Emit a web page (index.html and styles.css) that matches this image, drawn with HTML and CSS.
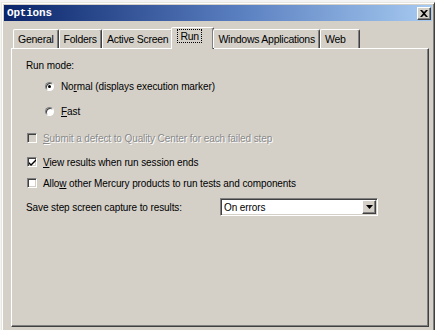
FILE: index.html
```html
<!DOCTYPE html>
<html lang="en">
<head>
  <meta charset="UTF-8" />
  <title>Options</title>
  <link rel="stylesheet" href="styles.css">
</head>
<body>
  <div class="window">
    <div class="titlebar">
      <span class="title">Options</span>
      <span class="close-btn">
        <svg width="8" height="7" viewBox="0 0 8 7"><path d="M0 0h2l2 2 2-2h2L5 3.5 8 7H6L4 5 2 7H0l3-3.5z" fill="#000"/></svg>
      </span>
    </div>

    <div class="body">
      <div class="tabs">
        <div class="tab">General</div>
        <div class="tab">Folders</div>
        <div class="tab">Active Screen</div>
        <div class="tab active"><span class="focus">Run</span></div>
        <div class="tab">Windows Applications</div>
        <div class="tab">Web</div>
      </div>

      <div class="panel">
        <div class="label run-mode">Run mode:</div>

        <div class="option radio-row">
          <span class="radio checked"></span>
          <span>No<u>r</u>mal (displays execution marker)</span>
        </div>
        <div class="option radio-row fast">
          <span class="radio"></span>
          <span><u>F</u>ast</span>
        </div>

        <div class="option check-row disabled submit">
          <span class="checkbox"></span>
          <span class="muted"><u>S</u>ubmit a defect to Quality Center for each failed step</span>
        </div>
        <div class="option check-row view">
          <span class="checkbox">
            <svg width="7" height="7" viewBox="0 0 7 7"><path d="M0 3l2 2 5-5v2L2 7 0 5z" fill="#000"/></svg>
          </span>
          <span><u>V</u>iew results when run session ends</span>
        </div>
        <div class="option check-row allow">
          <span class="checkbox"></span>
          <span>Allo<u>w</u> other Mercury products to run tests and components</span>
        </div>

        <div class="option save-row">
          <span class="save-label">Save step screen capture to results:</span>
          <div class="select">
            <span class="select-value">On errors</span>
            <span class="select-btn">
              <svg width="7" height="4" viewBox="0 0 7 4"><path d="M0 0h7L3.5 4z" fill="#000"/></svg>
            </span>
          </div>
        </div>
      </div>
    </div>
  </div>
</body>
</html>
```

FILE: styles.css
```css
* { box-sizing: border-box; }
body {
  margin: 0;
  background: #f4f4f4;
  font-family: "Liberation Sans", Arial, sans-serif;
  font-size: 10px;
  color: #000;
  overflow: hidden;
}
.window {
  margin: 2px 0 0 1px;
  height: 360px;
  background: #d4d0c8;
  border: 1px solid;
  border-color: #e8e6e0 #404040 #404040 #e8e6e0;
  box-shadow: inset 1px 1px #fff, inset -1px -1px #808080;
  padding: 2px;
}
.titlebar {
  height: 16px;
  display: flex;
  align-items: center;
  justify-content: space-between;
  padding: 0 1px 0 3px;
  background: linear-gradient(to right, #0a246a, #5a7fc0 55%, #a6caf0);
}
.title {
  color: #fff;
  font-family: "Liberation Mono", monospace;
  font-weight: bold;
  font-size: 11px;
  letter-spacing: -0.2px;
}
.close-btn {
  width: 14px;
  height: 13px;
  display: flex;
  align-items: center;
  justify-content: center;
  background: #d4d0c8;
  border: 1px solid;
  border-color: #fff #404040 #404040 #fff;
  box-shadow: inset -1px -1px #808080;
}
.body {
  padding: 6px 0 0 7px;
}
.tabs {
  display: flex;
  align-items: flex-end;
  height: 21px;
  padding-left: 2px;
  position: relative;
  z-index: 1;
}
.tab {
  height: 19px;
  min-width: 40px;
  padding: 3px 4px 0 4px;
  border: 1px solid;
  border-bottom: none;
  border-color: #fff #404040 transparent #fff;
  box-shadow: inset -1px 0 #808080;
  border-radius: 2px 2px 0 0;
  font-size: 10.5px;
  letter-spacing: -0.25px;
  white-space: nowrap;
}
.tab.active {
  height: 22px;
  min-width: 43px;
  margin: 0 -1px -1px -2px;
  padding: 2px 6px 0 6px;
  background: #d4d0c8;
}
.focus {
  outline: 1px dotted #000;
  outline-offset: 0;
  padding: 0 2px;
}
.panel {
  width: 418px;
  height: 279px;
  border: 1px solid;
  border-color: #fff #404040 #404040 #fff;
  box-shadow: inset -1px -1px #808080;
  padding: 10px 0 0 14px;
  display: flex;
  flex-direction: column;
  align-items: flex-start;
}
.option {
  display: flex;
  align-items: center;
  font-size: 10px;
  letter-spacing: -0.1px;
  white-space: nowrap;
}
.label {
  font-size: 10px;
  letter-spacing: -0.1px;
  line-height: 14px;
}
.radio-row { margin-left: 19px; gap: 7px; height: 14px; }
.run-mode + .radio-row { margin-top: 6px; }
.fast { margin-top: 11px; }
.check-row { margin-left: 1px; gap: 6px; height: 14px; }
.submit { margin-top: 13px; }
.view { margin-top: 10px; }
.allow { margin-top: 7px; }
.save-row { margin-top: 8px; height: 18px; }
.radio {
  width: 9px;
  height: 9px;
  border-radius: 50%;
  background: #fff;
  border: 1px solid;
  border-color: #808080 #fff #fff #808080;
  box-shadow: inset 1px 1px #404040;
  position: relative;
}
.radio.checked::after {
  content: "";
  position: absolute;
  left: 2px;
  top: 2px;
  width: 3px;
  height: 3px;
  border-radius: 50%;
  background: #000;
}
.checkbox {
  width: 10px;
  height: 10px;
  background: #fff;
  border: 1px solid;
  border-color: #808080 #fff #fff #808080;
  box-shadow: inset 1px 1px #404040, inset -1px -1px #d4d0c8;
  display: flex;
  align-items: center;
  justify-content: center;
}
.disabled .checkbox { background: #d4d0c8; }
.muted {
  color: #8a8a8a;
  text-shadow: 1px 1px #fff;
}
.save-label { width: 194px; }
.select {
  width: 158px;
  height: 18px;
  display: flex;
  align-items: center;
  justify-content: space-between;
  background: #fff;
  border: 1px solid;
  border-color: #808080 #fff #fff #808080;
  box-shadow: inset 1px 1px #404040, inset -1px -1px #d4d0c8;
  padding: 0 1px 0 3px;
}
.select-btn {
  width: 14px;
  height: 14px;
  display: flex;
  align-items: center;
  justify-content: center;
  background: #d4d0c8;
  border: 1px solid;
  border-color: #fff #404040 #404040 #fff;
  box-shadow: inset -1px -1px #808080;
}
```
